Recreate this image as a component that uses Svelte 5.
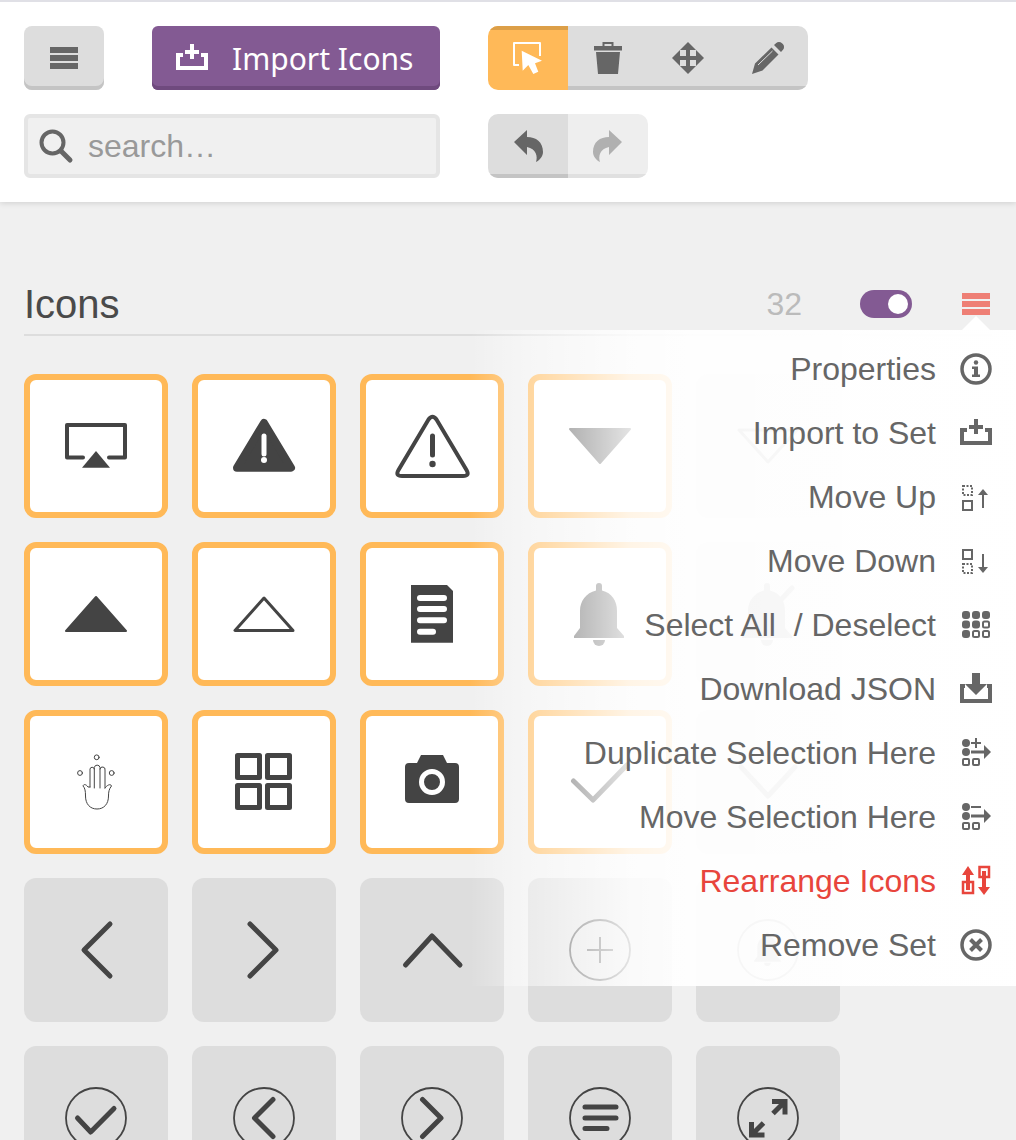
<script>
	const menuItems = [
		{ label: 'Properties', icon: infoIcon },
		{ label: 'Import to Set', icon: trayIcon },
		{ label: 'Move Up', icon: moveUpIcon },
		{ label: 'Move Down', icon: moveDownIcon },
		{ label: 'Select All  / Deselect', icon: selectAllIcon },
		{ label: 'Download JSON', icon: downloadIcon },
		{ label: 'Duplicate Selection Here', icon: duplicateIcon },
		{ label: 'Move Selection Here', icon: moveSelectionIcon },
		{ label: 'Rearrange Icons', icon: rearrangeIcon, danger: true },
		{ label: 'Remove Set', icon: removeIcon }
	];

	const tiles = [
		{ icon: airplay, selected: true },
		{ icon: warningFilled, selected: true },
		{ icon: warningOutline, selected: true },
		{ icon: triangleDown, selected: true },
		{ icon: triangleDownOutline },
		{ icon: triangleUp, selected: true },
		{ icon: triangleUpOutline, selected: true },
		{ icon: documentIcon, selected: true },
		{ icon: bell, selected: true },
		{ icon: bellOff },
		{ icon: hand, selected: true },
		{ icon: gridIcon, selected: true },
		{ icon: camera, selected: true },
		{ icon: check, selected: true },
		{ icon: chevronDown },
		{ icon: chevronLeft },
		{ icon: chevronRight },
		{ icon: chevronUp },
		{ icon: plusCircle },
		{ icon: bellCircle },
		{ icon: checkCircle },
		{ icon: leftCircle },
		{ icon: rightCircle },
		{ icon: linesCircle },
		{ icon: expandCircle }
	];
</script>

{#snippet bars()}
	<path d="M0 0h28v6H0zM0 8h28v6H0zM0 16h28v6H0z" />
{/snippet}

{#snippet trayIcon()}
	<path d="M7 13H2V26H30V13H25M16 2V17M9 10H23" fill="none" stroke="currentColor" stroke-width="4" />
{/snippet}

{#snippet infoIcon()}
	<circle cx="16" cy="16" r="14" fill="none" stroke="currentColor" stroke-width="3.5" />
	<circle cx="16" cy="9.5" r="2.2" />
	<path d="M12 13.5h6v8h2v2.5h-8v-2.5h2v-5.5h-2z" />
{/snippet}

{#snippet moveUpIcon()}
	<rect x="3" y="5" width="9" height="9" fill="none" stroke="currentColor" stroke-width="2" stroke-dasharray="2 1.5" />
	<rect x="3" y="20" width="9" height="9" fill="none" stroke="currentColor" stroke-width="2" />
	<path d="M23 11V27" fill="none" stroke="currentColor" stroke-width="2" />
	<path d="M23 8l5 6H18z" />
{/snippet}

{#snippet moveDownIcon()}
	<rect x="3" y="5" width="9" height="9" fill="none" stroke="currentColor" stroke-width="2" />
	<rect x="3" y="19" width="9" height="9" fill="none" stroke="currentColor" stroke-width="2" stroke-dasharray="2 1.5" />
	<path d="M23 9V24" fill="none" stroke="currentColor" stroke-width="2" />
	<path d="M23 28l5-6H18z" />
{/snippet}

{#snippet selectAllIcon()}
	{#each [6, 16, 26] as x, col}
		{#each [6, 15.5, 25] as y, row}
			{#if col + row < 3}
				<rect x={x - 4} y={y - 4} width="8" height="8" rx="3" />
			{:else}
				<rect x={x - 3} y={y - 3} width="6" height="6" rx="1.5" fill="none" stroke="currentColor" stroke-width="2" />
			{/if}
		{/each}
	{/each}
{/snippet}

{#snippet downloadIcon()}
	<path d="M12 0H20V11H27L16 22L5 11H12Z" />
	<path d="M5 13H2V28H30V13H27" fill="none" stroke="currentColor" stroke-width="4" />
{/snippet}

{#snippet listArrow()}
	<circle cx="6" cy="6" r="4" />
	<circle cx="6" cy="15" r="4" />
	<rect x="3" y="22" width="6" height="6" rx="1" fill="none" stroke="currentColor" stroke-width="2" />
	<rect x="13" y="22" width="6" height="6" rx="1" fill="none" stroke="currentColor" stroke-width="2" />
	<path d="M11 15H25" fill="none" stroke="currentColor" stroke-width="3" />
	<path d="M24 8L31 15L24 22z" />
{/snippet}

{#snippet duplicateIcon()}
	{@render listArrow()}
	<path d="M16 1V11M11 6H21" fill="none" stroke="currentColor" stroke-width="2" />
{/snippet}

{#snippet moveSelectionIcon()}
	{@render listArrow()}
	<path d="M11 6H21" fill="none" stroke="currentColor" stroke-width="2" />
{/snippet}

{#snippet rearrangeIcon()}
	<path d="M8 1L14 10H10V25H6V10H2z" />
	<rect x="3" y="17" width="10" height="11" fill="none" stroke="currentColor" stroke-width="2.5" />
	<rect x="19.500" y="2" width="9.500" height="10" fill="none" stroke="currentColor" stroke-width="2.500" />
	<path d="M22 6H26V22H30L24 30L18 22H22z" />
{/snippet}

{#snippet removeIcon()}
	<circle cx="16" cy="16" r="14" fill="none" stroke="currentColor" stroke-width="3.5" />
	<path d="M10.5 10.5L21.5 21.5M21.5 10.5L10.5 21.5" fill="none" stroke="currentColor" stroke-width="4" />
{/snippet}

{#snippet airplay()}
	<path d="M19 43.5H3V11H61V43.5H45" fill="none" stroke-width="4" stroke-linecap="round" stroke-linejoin="round" />
	<path d="M32 37L46 53.7H18z" class="solid" stroke="none" />
{/snippet}

{#snippet warningFilled()}
	<path d="M32 9L59 53.7H5z" class="solid" stroke-width="8" stroke-linejoin="round" />
	<path d="M32 22V40" fill="none" stroke="#fff" stroke-width="5" stroke-linecap="round" />
	<circle cx="32" cy="46" r="3" fill="#fff" stroke="none" />
{/snippet}

{#snippet warningOutline()}
	<path d="M28.5 5.5Q32.5 0 36.5 5.5L66.5 56Q70 62 63 62H2Q-5 62 -1.5 56Z" fill="none" stroke-width="4" />
	<path d="M32.5 22V41" fill="none" stroke-width="5" stroke-linecap="round" />
	<circle cx="32.5" cy="50" r="3.2" class="solid" stroke="none" />
{/snippet}

{#snippet triangleDown()}
	<path d="M2 15H62L32 49z" class="solid" stroke-width="2" stroke-linejoin="round" />
{/snippet}

{#snippet triangleDownOutline()}
	<path d="M3 16H61L32 48z" fill="none" stroke-width="3" stroke-linejoin="round" />
{/snippet}

{#snippet triangleUp()}
	<path d="M2 49H62L32 15z" class="solid" stroke-width="2" stroke-linejoin="round" />
{/snippet}

{#snippet triangleUpOutline()}
	<path d="M3 48.5H61L32 16z" fill="none" stroke-width="3" stroke-linejoin="round" />
{/snippet}

{#snippet documentIcon()}
	<path d="M11 3H47L53 9V60.7H11z" class="solid" stroke="none" />
	<path d="M20 16H44M20 27H44M20 38.3H44M20 49.7H33" fill="none" stroke="#fff" stroke-width="6" stroke-linecap="round" />
{/snippet}

{#snippet bellShape()}
	<path d="M28 8.5V4a3 3 0 0 1 6 0V8.5C44 11 49 19 49 29V46L56 54V56H6V54L12 46V29C12 19 18 11 28 8.5Z" class="solid" stroke="none" />
	<path d="M25 58H37A6 6 0 0 1 25 58Z" class="solid" stroke="none" />
{/snippet}

{#snippet bell()}
	{@render bellShape()}
{/snippet}

{#snippet bellOff()}
	{@render bellShape()}
	<path d="M56 6L24 40" fill="none" stroke-width="5" stroke-linecap="round" />
{/snippet}

{#snippet hand()}
	<g fill="none" stroke-width="1" stroke-linecap="round" stroke-linejoin="round">
		<circle cx="32.7" cy="7.3" r="2.4" />
		<circle cx="16" cy="23" r="2.4" />
		<circle cx="47.7" cy="23" r="2.4" />
		<path d="M26 37V19A2.2 2.2 0 0 1 30.3 19V38M30.3 19V17.5A2.9 2.9 0 0 1 36 17.5V38M36 19A2.5 2.5 0 0 1 41 20V38" />
		<path d="M26 37L24 37C22 34 19.5 34 19 36C21 38 21.5 41 21.5 46C21.5 54 26 59 33 59C40 59 44.5 54 44.5 46C44.5 42 45 39 47.5 36C47 34 44 34 41 38" />
	</g>
{/snippet}

{#snippet gridIcon()}
	<g fill="none" stroke-width="5" stroke-linejoin="round">
		<rect x="5.5" y="5.5" width="22" height="22" />
		<rect x="35.5" y="5.5" width="22" height="22" />
		<rect x="5.5" y="35.5" width="22" height="22" />
		<rect x="35.5" y="35.5" width="22" height="22" />
	</g>
{/snippet}

{#snippet camera()}
	<path d="M5 17a4 4 0 0 1 4-4H17L21 5H43L47 13H55a4 4 0 0 1 4 4V49a4 4 0 0 1-4 4H9a4 4 0 0 1-4-4Z" class="solid" stroke="none" />
	<circle cx="32" cy="32" r="10.5" fill="none" stroke="#fff" stroke-width="5" />
{/snippet}

{#snippet check()}
	<path d="M5.5 31L25 50L59 15" fill="none" stroke-width="5" stroke-linecap="round" stroke-linejoin="round" />
{/snippet}

{#snippet chevronDown()}
	<path d="M5 17L32 46L59 17" fill="none" stroke-width="5" stroke-linecap="round" stroke-linejoin="round" />
{/snippet}

{#snippet chevronLeft()}
	<path d="M46 6L20 32L46 58" fill="none" stroke-width="5" stroke-linecap="round" stroke-linejoin="round" />
{/snippet}

{#snippet chevronRight()}
	<path d="M18 6L44 32L18 58" fill="none" stroke-width="5" stroke-linecap="round" stroke-linejoin="round" />
{/snippet}

{#snippet chevronUp()}
	<path d="M5.5 47L32 18L60 47" fill="none" stroke-width="5" stroke-linecap="round" stroke-linejoin="round" />
{/snippet}

{#snippet ring()}
	<circle cx="32" cy="32" r="30" fill="none" stroke-width="1.8" />
{/snippet}

{#snippet plusCircle()}
	{@render ring()}
	<path d="M32 19V45M19 32H45" fill="none" stroke-width="2" />
{/snippet}

{#snippet bellCircle()}
	{@render ring()}
	<g transform="translate(15 14) scale(.53)">
		{@render bellShape()}
	</g>
{/snippet}

{#snippet checkCircle()}
	{@render ring()}
	<path d="M13.5 32L26.7 46L50 22.5" fill="none" stroke-width="5" stroke-linecap="round" stroke-linejoin="round" />
{/snippet}

{#snippet leftCircle()}
	{@render ring()}
	<path d="M41 13.5L22.5 32L41 50.5" fill="none" stroke-width="5" stroke-linecap="round" stroke-linejoin="round" />
{/snippet}

{#snippet rightCircle()}
	{@render ring()}
	<path d="M22.5 13.5L41 32L22.5 50.5" fill="none" stroke-width="5" stroke-linecap="round" stroke-linejoin="round" />
{/snippet}

{#snippet linesCircle()}
	{@render ring()}
	<path d="M17 21H48M17 32H48M17 42.5H39" fill="none" stroke-width="5" stroke-linecap="round" />
{/snippet}

{#snippet expandCircle()}
	{@render ring()}
	<path d="M36 15.5H49V28.5M49 15.5L37 27.5M15.5 36V49H28.5M15.5 49L27.5 37" fill="none" stroke-width="5" />
{/snippet}

<div class="page">
	<header class="toolbar">
		<button class="btn menu-btn">
			<svg width="28" height="22" viewBox="0 0 28 22">{@render bars()}</svg>
		</button>
		<button class="btn import-btn">
			<svg width="32" height="32" viewBox="0 0 32 32">{@render trayIcon()}</svg>
			<span>Import Icons</span>
		</button>
		<div class="group tools">
			<button class="btn active">
				<svg width="32" height="32" viewBox="0 0 32 32">
					<path d="M7 23H2V1H28V14" fill="none" stroke="#fff" stroke-width="2" stroke-linejoin="round" />
					<path d="M9.7 8.7L30 18.7L23 21.3L26.3 29.7L21.3 32L16.3 23L10.7 28.7Z" fill="#fff" stroke="#ffb958" stroke-width="2" paint-order="stroke" />
				</svg>
			</button>
			<button class="btn">
				<svg width="32" height="32" viewBox="0 0 32 32">
					<path d="M11.5 4.5V1H20.5V4.5" fill="none" stroke="currentColor" stroke-width="2" />
					<path d="M2 4H30V8.5H2zM4 10H28L26 32H6z" />
				</svg>
			</button>
			<button class="btn">
				<svg width="32" height="32" viewBox="0 0 32 32">
					<path d="M16 0L32 16L16 32L0 16Z" />
					<path d="M8 8H14V14H8zM18 8H24V14H18zM8 18H14V24H8zM18 18H24V24H18z" fill="#ddd" />
				</svg>
			</button>
			<button class="btn">
				<svg width="32" height="32" viewBox="0 0 32 32">
					<path d="M0 32L3 21.5L19.5 5.500L26.500 12.500L10.500 28.500ZM22 3L24 1.200a4.200 4.200 0 0 1 6 0L30.800 2a4.200 4.200 0 0 1 0 6L29 10Z" />
					<path d="M6 23L20.500 9" fill="none" stroke="#ddd" stroke-width="1" />
				</svg>
			</button>
		</div>
		<label class="search">
			<svg width="32" height="32" viewBox="0 0 32 32">
				<circle cx="12.500" cy="12.500" r="11" fill="none" stroke="currentColor" stroke-width="4" />
				<path d="M21 21L30 30" fill="none" stroke="currentColor" stroke-width="5" stroke-linecap="round" />
			</svg>
			<input type="text" placeholder="search…" />
		</label>
		<div class="group history">
			<button class="btn">
				<svg width="32" height="32" viewBox="0 0 32 32">
					<path d="M2 12L15 0V7C24 7 31 12 31 22C31 26 28 30 24 32C26 26 24 19 15 17V25Z" />
				</svg>
			</button>
			<button class="btn disabled">
				<svg class="flip" width="32" height="32" viewBox="0 0 32 32">
					<path d="M2 12L15 0V7C24 7 31 12 31 22C31 26 28 30 24 32C26 26 24 19 15 17V25Z" />
				</svg>
			</button>
		</div>
	</header>

	<section class="set">
		<div class="set-head">
			<h2>Icons</h2>
			<span class="count">32</span>
			<span class="toggle"><span class="knob"></span></span>
			<svg class="set-menu" width="28" height="22" viewBox="0 0 28 22">{@render bars()}</svg>
		</div>

		<div class="tiles">
			{#each tiles as tile}
				<div class="tile" class:selected={tile.selected}>
					<svg width="64" height="64" viewBox="0 0 64 64">{@render tile.icon()}</svg>
				</div>
			{/each}
		</div>

		<ul class="set-dropdown">
			{#each menuItems as item}
				<li class:danger={item.danger}>
					<span>{item.label}</span>
					<svg width="32" height="32" viewBox="0 0 32 32">{@render item.icon()}</svg>
				</li>
			{/each}
		</ul>
	</section>
</div>

<style>
	:global(body) {
		background: #f0f0f0;
	}

	.page {
		width: 1016px;
		height: 1140px;
		overflow: hidden;
		font-family: 'Liberation Sans', Arial, sans-serif;
		color: #666;
	}

	svg {
		display: block;
		overflow: visible;
		fill: currentColor;
		flex: none;
	}

	.toolbar {
		display: grid;
		grid-template-columns: 80px 288px 320px;
		grid-template-rows: 64px 64px;
		column-gap: 48px;
		row-gap: 24px;
		height: 152px;
		padding: 24px;
		background: #fff;
		border-top: 2px solid #e0e0e6;
		box-shadow: 0 1px 6px rgba(0, 0, 0, 0.14);
	}

	.btn {
		display: flex;
		align-items: center;
		justify-content: center;
		padding: 0;
		border: 0;
		width: 80px;
		height: 64px;
		color: #666;
		background: #ddd;
		box-shadow: inset 0 -4px 0 #c4c4c4;
	}

	.menu-btn {
		border-radius: 8px;
	}

	.import-btn {
		justify-content: flex-start;
		box-sizing: border-box;
		width: 288px;
		padding-left: 24px;
		gap: 24px;
		color: #fff;
		background: #835a93;
		border-radius: 6px;
		box-shadow: inset 0 -4px 0 #6f4a7e;
		font-family: 'Noto Sans', sans-serif;
		font-size: 30px;
	}

	.group {
		display: flex;
		border-radius: 10px;
		overflow: hidden;
	}

	.tools {
		width: 320px;
	}

	.history {
		width: 160px;
	}

	.btn.active {
		color: #fff;
		background: #ffb958;
		box-shadow: inset 0 4px 0 #dc9f48;
	}

	.btn.disabled {
		color: #b0b0b0;
		background: #eee;
		box-shadow: inset 0 -4px 0 #e0e0e0;
	}

	.flip {
		transform: scaleX(-1);
	}

	.search {
		grid-column: 1 / span 2;
		display: flex;
		align-items: center;
		gap: 16px;
		box-sizing: border-box;
		padding-left: 12px;
		background: #f0f0f0;
		border: 4px solid #e5e5e5;
		border-radius: 6px;
	}

	.search input {
		flex: 1;
		min-width: 0;
		padding: 0;
		border: 0;
		outline: 0;
		background: none;
		font: 32px 'Liberation Sans', Arial, sans-serif;
	}

	.search input::placeholder {
		color: #999;
		opacity: 1;
	}

	.set {
		position: relative;
		padding: 62px 24px 0;
	}

	.set-head {
		display: flex;
		align-items: center;
		box-sizing: border-box;
		height: 72px;
		padding-top: 10px;
		border-bottom: 2px solid #ddd;
	}

	h2 {
		margin: 0;
		flex: 1;
		font-size: 40px;
		font-weight: normal;
		color: #4a4a4a;
	}

	.count {
		font-size: 32px;
		color: #bbb;
	}

	.toggle {
		display: flex;
		align-items: center;
		justify-content: flex-end;
		box-sizing: border-box;
		width: 52px;
		height: 28px;
		margin-left: 58px;
		padding-right: 4px;
		background: #835a93;
		border-radius: 14px;
	}

	.knob {
		width: 20px;
		height: 20px;
		background: #fff;
		border-radius: 50%;
	}

	.set-menu {
		margin-left: 50px;
		margin-right: 2px;
		color: #ee7f75;
	}

	.tiles {
		display: grid;
		grid-template-columns: repeat(5, 144px);
		gap: 24px;
		margin-top: 38px;
	}

	.tile {
		display: flex;
		align-items: center;
		justify-content: center;
		box-sizing: border-box;
		height: 144px;
		background: #ddd;
		border-radius: 12px;
		stroke: #444;
	}

	.tile.selected {
		background: #fff;
		border: 6px solid #ffb958;
	}

	.tile :global(.solid) {
		fill: #444;
	}

	.tile svg {
		fill: #444;
		stroke: #444;
	}

	.set-dropdown {
		position: absolute;
		top: 128px;
		left: 470px;
		right: 0;
		height: 656px;
		margin: 0;
		padding: 7px 24px 9px 0;
		box-sizing: border-box;
		list-style: none;
		background: linear-gradient(
			to right,
			rgba(255, 255, 255, 0),
			rgba(255, 255, 255, 0.42) 10.6%,
			rgba(255, 255, 255, 0.63) 20%,
			rgba(255, 255, 255, 0.85) 29.3%,
			rgba(255, 255, 255, 0.95) 42%,
			rgba(255, 255, 255, 0.99)
		);
	}

	.set-dropdown::before {
		content: '';
		position: absolute;
		top: -14px;
		right: 26px;
		border: 14px solid transparent;
		border-top: 0;
		border-bottom-color: #fff;
	}

	.set-dropdown li {
		display: flex;
		align-items: center;
		justify-content: flex-end;
		gap: 24px;
		height: 64px;
		font-size: 32px;
		white-space: pre;
		color: #666;
	}

	.set-dropdown li.danger {
		color: #e8453c;
	}

	.set-dropdown li svg {
		fill: currentColor;
	}
</style>
